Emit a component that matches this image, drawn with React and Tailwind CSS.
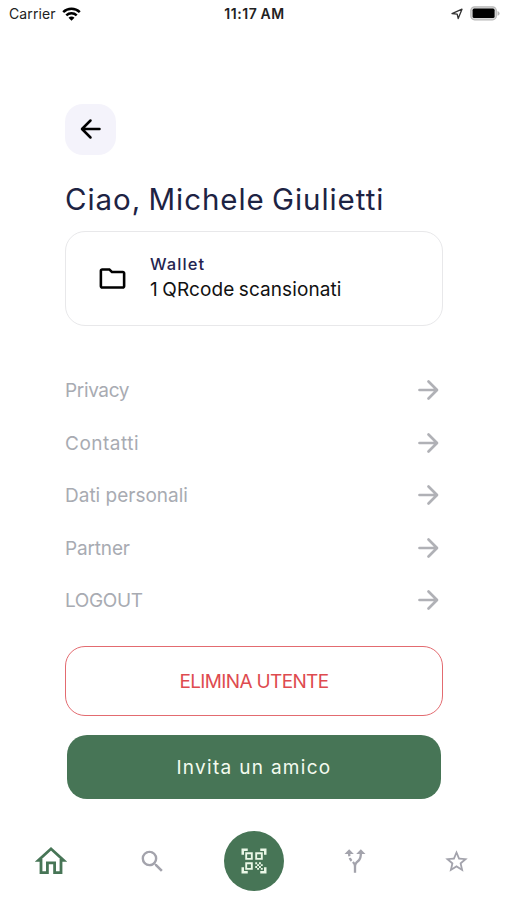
import { MdAltRoute, MdOutlineFolder, MdQrCodeScanner, MdSearch, MdStarOutline } from 'react-icons/md'

const MENU = [
  { label: 'Privacy', tracking: 'tracking-[-0.35px]' },
  { label: 'Contatti', tracking: 'tracking-[0.5px]' },
  { label: 'Dati personali', tracking: 'tracking-[0px]' },
  { label: 'Partner', tracking: 'tracking-[-0.15px]' },
  { label: 'LOGOUT', tracking: 'tracking-[-0.35px]' },
]

function Arrow({ className }) {
  return (
    <svg viewBox="0 0 24 24" className={className} fill="none" stroke="currentColor" strokeLinecap="round" strokeLinejoin="round">
      <path d="M3.5 12H20M12.5 3.5L21 12L12.5 20.5" />
    </svg>
  )
}

function StatusBar() {
  return (
    <div className="grid h-[27px] grid-cols-3 items-center pl-[9px] pr-[7px] text-black">
      <div className="flex items-center gap-[6px]">
        <span className="text-[14px] tracking-[0.1px] text-[#222]">Carrier</span>
        <svg width="19" height="14" viewBox="0 0 19 14" fill="none" stroke="currentColor" strokeWidth="2.5">
          <path d="M1.2 5.1C5.8 .6 13.2 .6 17.8 5.1" />
          <path d="M4.3 8.4C7.2 5.6 11.8 5.6 14.7 8.4" />
          <path d="M9.5 13.7L6.5 10.8C8.2 9.2 10.8 9.2 12.5 10.8Z" fill="currentColor" stroke="none" />
        </svg>
      </div>
      <span className="text-center text-[14px] font-semibold tracking-[0.6px] text-[#222] [word-spacing:-1px]">11:17 AM</span>
      <div className="flex items-center justify-end gap-[7px]">
        <svg width="12" height="12" viewBox="0 0 12 12" fill="none" stroke="#333" strokeWidth="1.3" strokeLinejoin="round">
          <path d="M1 5.6L11 1.2L7.2 10.6L6.2 6.2Z" />
        </svg>
        <svg width="30" height="15" viewBox="0 0 30 15">
          <rect x=".8" y=".8" width="25.5" height="13" rx="3.8" fill="#d8d8d8" stroke="#b8b8b8" strokeWidth="1.2" />
          <rect x="2.6" y="2.6" width="22" height="9.4" rx="1.6" fill="#000" />
          <path d="M27.5 5V9.8Q29.6 9 29.6 7.4T27.5 5Z" fill="#b5b5b5" />
        </svg>
      </div>
    </div>
  )
}

function HomeIcon() {
  return (
    <svg width="32" height="30" viewBox="0 0 32 30" fill="none" stroke="#477556" strokeWidth="2.8">
      <path d="M6 14.3H3.5L16 2.8L28.5 14.3H26V26.6H19.6V16.8H12.4V26.6H6Z" />
    </svg>
  )
}

function BottomNav() {
  return (
    <nav className="mt-[32px] grid h-[61px] grid-cols-5 items-center justify-items-center text-[#a3a3ac]">
      <HomeIcon />
      <MdSearch size={29} />
      <div className="ml-px flex size-[60px] items-center justify-center rounded-full bg-[#477556] text-[#eaf7e6]">
        <MdQrCodeScanner size={30} />
      </div>
      <MdAltRoute size={28} />
      <MdStarOutline size={27} />
    </nav>
  )
}

export default function App() {
  return (
    <div className="h-[900px] w-[507px] overflow-hidden bg-white font-['Inter',sans-serif]">
      <StatusBar />

      <main className="px-[65px] pt-[77px]">
        <button className="flex size-[51px] items-center justify-center rounded-[18px] bg-[#f4f3fb] pb-px text-black">
          <Arrow className="size-[24px] rotate-180 stroke-[2.5]" />
        </button>

        <h1 className="mt-[24px] h-[40px] whitespace-nowrap text-[29.5px] leading-[40px] tracking-[0.95px] text-[#1d2343] [word-spacing:-2px]">
          Ciao, Michele Giulietti
        </h1>

        <section className="mt-[12px] flex h-[95px] w-[378px] items-center rounded-[20px] border border-[#e8e8ea] pl-[31px]">
          <MdOutlineFolder size={31} />
          <div className="ml-[22px] whitespace-nowrap pb-[4px]">
            <p className="text-[16.5px] leading-[25px] font-medium tracking-[1.1px] text-[#25244f]">Wallet</p>
            <p className="text-[19px] leading-[25px] tracking-[0.1px] text-[#111] [word-spacing:-1px]">1 QRcode scansionati</p>
          </div>
        </section>

        <ul className="mt-[38px] w-[378px]">
          {MENU.map(({ label, tracking }) => (
            <li key={label} className="flex h-[52.5px] items-center justify-between pr-[3px] text-[#a8abb2]">
              <span className={`pt-[2px] text-[19px] ${tracking}`}>{label}</span>
              <Arrow className="size-[24px] stroke-[2.7] text-[#b0b1b6]" />
            </li>
          ))}
        </ul>

        <button className="mt-[19px] h-[70px] w-[378px] rounded-[20px] border-[1.5px] border-[#e36b70] pt-[3px] text-[19px] tracking-[-0.65px] text-[#de4b4f]">
          ELIMINA UTENTE
        </button>
        <button className="mt-[19px] ml-[2px] h-[64px] w-[374px] rounded-[20px] bg-[#477556] pt-[3px] text-[19px] tracking-[1.3px] text-[#f3fbef]">
          Invita un amico
        </button>
      </main>

      <BottomNav />
    </div>
  )
}
